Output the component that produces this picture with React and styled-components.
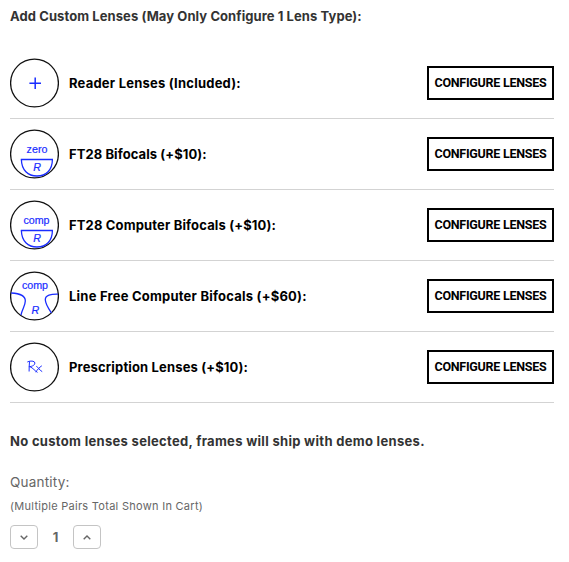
import React from "react";
import styled, { createGlobalStyle } from "styled-components";

const GlobalStyle = createGlobalStyle`
  * {
    box-sizing: border-box;
  }

  body {
    margin: 0;
    background: #fff;
    font-family: Inter, "Liberation Sans", sans-serif;
  }
`;

const ContainerMain = styled.main`
  width: 544px;
  margin-left: 10px;
  white-space: nowrap;
`;

const Heading = styled.h4`
  height: 48px;
  margin: 0;
  padding-top: 6px;
  font-size: 13px;
  font-weight: 700;
  line-height: 20px;
  letter-spacing: ${({ $tracking }) => $tracking}px;
  color: #333;
`;

const LensRow = styled.div`
  height: 71px;
  display: flex;
  align-items: center;
  border-bottom: 1px solid #d3d3d3;
`;

const LensIcon = styled.svg`
  width: 49px;
  height: 50px;
  flex: none;
  margin-right: 10px;
  fill: none;
  stroke: #1a2dff;
  stroke-width: 1.3;

  text {
    fill: #1a2dff;
    stroke-width: 0.2;
    font-family: "Liberation Sans", sans-serif;
    font-size: 10.7px;
    text-anchor: middle;
  }
`;

const LensName = styled.span`
  flex: 1;
  padding-bottom: 1px;
  font-size: 13px;
  font-weight: 700;
  line-height: 20px;
  letter-spacing: ${({ $tracking }) => $tracking}px;
  color: #000;
`;

const ConfigureButton = styled.button`
  width: 127px;
  height: 34px;
  display: flex;
  align-items: center;
  justify-content: center;
  padding: 0 0 2px;
  border: 2px solid #000;
  background: #fff;
  font-family: Roboto, sans-serif;
  font-size: 12.5px;
  font-weight: 700;
  letter-spacing: -0.25px;
  color: #000;
`;

const Message = styled.p`
  margin: 28px 0 0;
  font-size: 13px;
  font-weight: 700;
  line-height: 20px;
  letter-spacing: ${({ $tracking }) => $tracking}px;
  color: #333;
`;

const QuantityLabel = styled.label`
  display: block;
  margin-top: 21px;
  font-size: 13.5px;
  line-height: 20px;
  letter-spacing: 0.2px;
  color: #666;
`;

const QuantityNote = styled.small`
  display: block;
  margin-top: 6px;
  font-size: 11px;
  line-height: 16px;
  letter-spacing: 0.28px;
  color: #666;
`;

const Stepper = styled.div`
  display: flex;
  align-items: center;
  margin-top: 11px;
`;

const StepButton = styled.button`
  width: 28px;
  height: 24px;
  display: flex;
  align-items: center;
  justify-content: center;
  padding: 0;
  border: 1px solid #c4c4c4;
  border-radius: 4px;
  background: #fff;
`;

const StepValue = styled.span`
  width: 35px;
  font-size: 13px;
  font-weight: 700;
  line-height: 20px;
  text-align: center;
  color: #666;
`;

const Chevron = styled.svg`
  width: 8px;
  height: 5px;
  fill: none;
  stroke: #666;
  stroke-width: 1.4;
`;

const Segment = () => (
  <>
    <path d="M10.8 30.5H43" />
    <path d="M11.4 30.5C11.5 41 18 47 27 47S42.4 41 42.4 30.5" />
    <text x="27" y="42" fontStyle="italic">R</text>
  </>
);

const lenses = [
  {
    name: "Reader Lenses (Included):",
    tracking: 0.22,
    art: <path d="M19.4 25.2H31M25.2 19.4V31" strokeWidth="1.5" />,
  },
  {
    name: "FT28 Bifocals (+$10):",
    tracking: 0.08,
    art: (
      <>
        <text x="27" y="24">zero</text>
        <Segment />
      </>
    ),
  },
  {
    name: "FT28 Computer Bifocals (+$10):",
    tracking: 0.15,
    art: (
      <>
        <text x="26.5" y="24.3">comp</text>
        <Segment />
      </>
    ),
  },
  {
    name: "Line Free Computer Bifocals (+$60):",
    tracking: 0.22,
    art: (
      <>
        <text x="25" y="18">comp</text>
        <path d="M1.2 22C10 22.5 15.5 24.5 15.3 30C15.2 35 12.3 37.5 11 44" />
        <path d="M48 23.2C41 23 35.2 24.2 35.3 28.8C35.5 33.5 38.8 38 41.5 42" />
        <text x="25.3" y="42.6" fontStyle="italic">R</text>
      </>
    ),
  },
  {
    name: "Prescription Lenses (+$10):",
    tracking: 0.15,
    art: (
      <path
        d="M17.3 20C19 19 23 18.5 24.5 20C26 23 22 24.6 18.8 24.7M19.5 19.5C19.2 23 19.1 26 19.1 29.5M20 24.7C23 26 25 29 27.5 30.4M31.8 23.8C29.5 25.3 27 28 25.7 30.2M26.3 24.3C28.3 25 29.5 28.5 32.2 29.6"
        strokeWidth="1"
      />
    ),
  },
];

function App() {
  return (
    <>
      <GlobalStyle />
      <ContainerMain>
        <Heading $tracking={0.08}>
          Add Custom Lenses (May Only Configure 1 Lens Type):
        </Heading>
        {lenses.map((lens) => (
          <LensRow key={lens.name}>
            <LensIcon viewBox="0 0 49 50">
              <circle cx="24.5" cy="25" r="23.9" stroke="#111" strokeWidth="1.3" />
              {lens.art}
            </LensIcon>
            <LensName $tracking={lens.tracking}>{lens.name}</LensName>
            <ConfigureButton>CONFIGURE LENSES</ConfigureButton>
          </LensRow>
        ))}
        <Message $tracking={0.31}>
          No custom lenses selected, frames will ship with demo lenses.
        </Message>
        <QuantityLabel>Quantity:</QuantityLabel>
        <QuantityNote>(Multiple Pairs Total Shown In Cart)</QuantityNote>
        <Stepper>
          <StepButton aria-label="Decrease quantity">
            <Chevron viewBox="0 0 8 5">
              <path d="M0.7 0.7L4 4L7.3 0.7" />
            </Chevron>
          </StepButton>
          <StepValue>1</StepValue>
          <StepButton aria-label="Increase quantity">
            <Chevron viewBox="0 0 8 5">
              <path d="M0.7 4.3L4 1L7.3 4.3" />
            </Chevron>
          </StepButton>
        </Stepper>
      </ContainerMain>
    </>
  );
}

export default App;
